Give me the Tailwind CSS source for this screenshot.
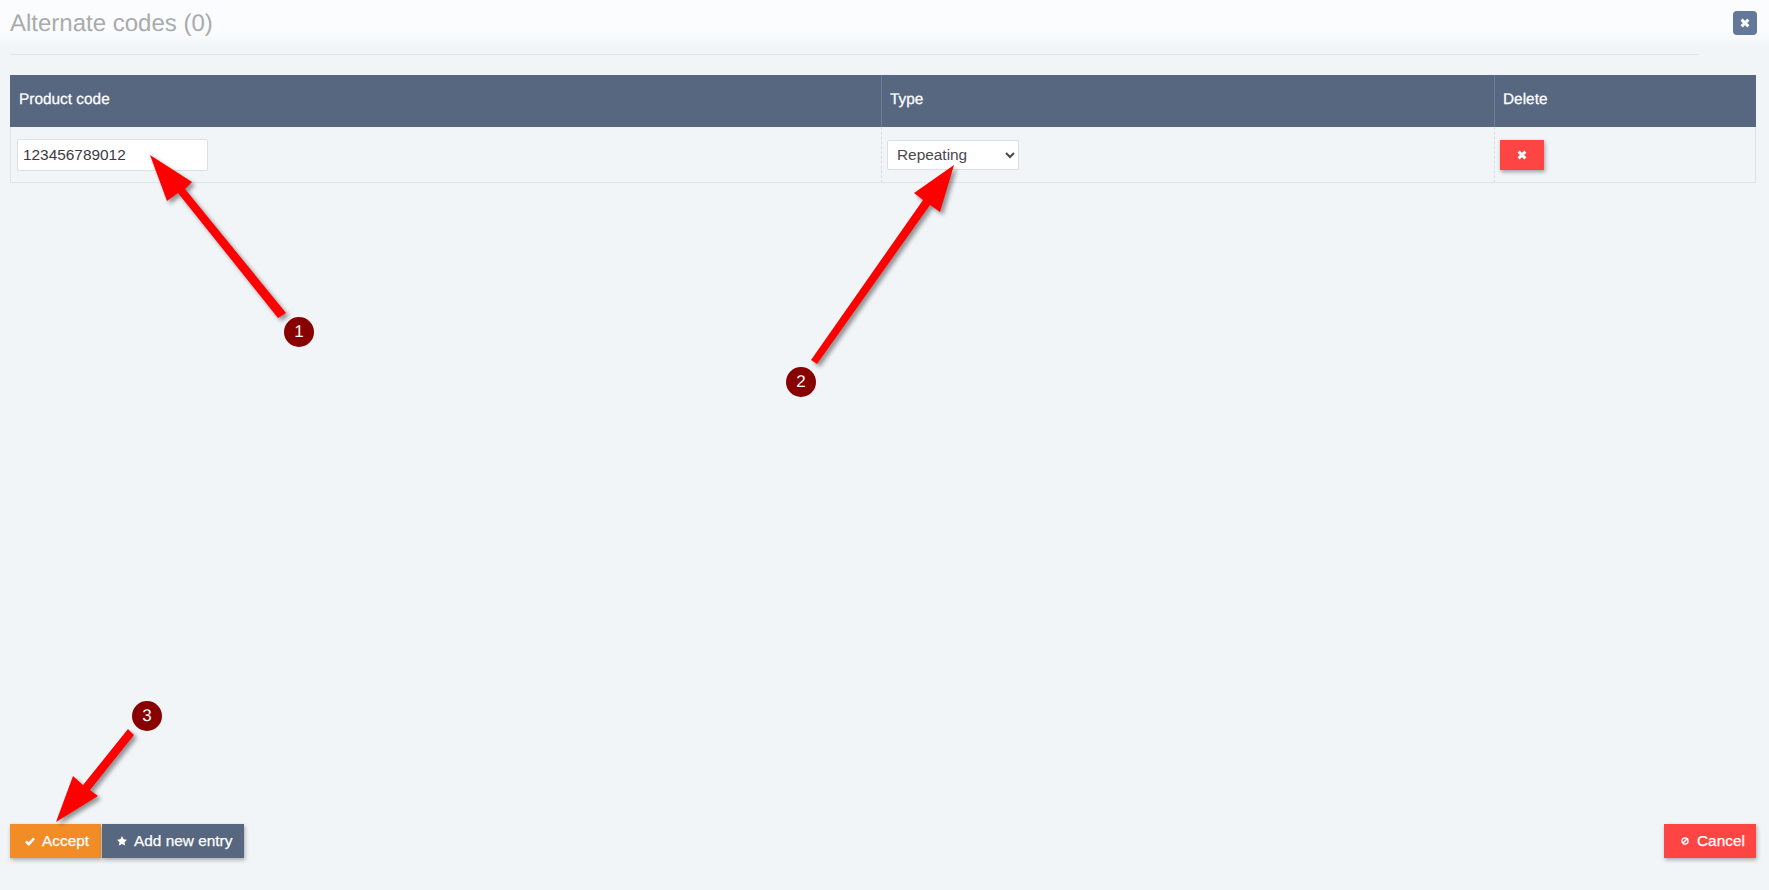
<!DOCTYPE html>
<html lang="en">
  <head>
    <meta charset="UTF-8" />
    <meta name="viewport" content="width=device-width, initial-scale=1.0" />
    <title>Alternate codes</title>
    <script src="https://cdn.jsdelivr.net/npm/@tailwindcss/browser@4"></script>
  </head>
  <body class="relative h-screen overflow-hidden flex flex-col bg-[#f1f5f8] font-['Liberation_Sans',Arial,sans-serif] text-[15.4px] text-[#3d3a40] [text-rendering:geometricPrecision]">
    <!-- title bar -->
    <div class="h-[48px] px-[10px] pt-[8px] flex justify-between bg-gradient-to-b from-[#fbfcfd] from-65% to-[#f1f5f8]">
      <h1 class="text-[24px] leading-[32px] text-[#a9abae]">Alternate codes (0)</h1>
      <button class="mt-[3px] mr-[2px] w-[24px] h-[24px] rounded-[4px] bg-[#64799a] flex items-center justify-center">
        <svg width="10" height="10" viewBox="0 0 10 10"><path d="M1.6 1.6 8.4 8.4M8.4 1.6 1.6 8.4" stroke="#fff" stroke-width="2.9" /></svg>
      </button>
    </div>
    <div class="mx-[10px] mt-[6px] w-[1688px] border-t border-[#dfe2e7]"></div>

    <!-- codes table -->
    <div class="px-[10px] mt-[20px] pr-[13px]">
      <table class="w-full table-fixed border-separate border-spacing-0">
        <thead>
          <tr class="h-[52px] bg-[#56677f] text-white text-left [-webkit-text-stroke:0.25px_white]">
            <th class="w-[871px] pl-[9px] pb-[3px] font-normal">Product code</th>
            <th class="w-[613px] pl-[8px] pb-[3px] font-normal border-l border-[#6b7f9b]">Type</th>
            <th class="pl-[8px] pb-[3px] font-normal border-l border-[#6b7f9b]">Delete</th>
          </tr>
        </thead>
        <tbody>
          <tr class="h-[56px]">
            <td class="pl-[6px] border-l border-b border-[#dfe3e8]">
              <input type="text" value="123456789012" class="block w-[191px] h-[32px] px-[5px] bg-white border border-[#dcdfe3] rounded-[2px] text-[#3d3a40]" />
            </td>
            <td class="pl-[5px] border-l border-b border-l-[#d9dde2] border-b-[#dfe3e8] [border-left-style:dashed]">
              <select class="block w-[132px] h-[30px] pl-[5px] bg-white border border-[#dcdfe3] rounded-[2px] text-[#4a474d]">
                <option>Repeating</option>
              </select>
            </td>
            <td class="pl-[5px] border-l border-b border-r border-l-[#d9dde2] border-b-[#dfe3e8] border-r-[#dfe3e8] [border-left-style:dashed]">
              <button class="w-[44px] h-[30px] bg-[#ff4444] shadow-[1px_2px_4px_rgba(0,0,0,0.35)] flex items-center justify-center">
                <svg width="10" height="10" viewBox="0 0 10 10"><path d="M1.6 1.6 8.4 8.4M8.4 1.6 1.6 8.4" stroke="#fff" stroke-width="2.9" /></svg>
              </button>
            </td>
          </tr>
        </tbody>
      </table>
    </div>

    <!-- actions -->
    <div class="mt-auto mb-[32px] px-[10px] pr-[13px] flex justify-between text-white [-webkit-text-stroke:0.25px_white]">
      <div class="flex gap-px">
        <button class="w-[91px] h-[34px] pl-[15px] bg-[#f28c26] shadow-[1px_2px_4px_rgba(0,0,0,0.3)] flex items-center gap-[7px]">
          <svg width="10" height="9" viewBox="0 0 10 9"><path d="M1 4.500 3.800 7.200 9 1.300" fill="none" stroke="#fff" stroke-width="2.500" /></svg>
          Accept
        </button>
        <button class="w-[142px] h-[34px] pl-[15px] bg-[#56677f] shadow-[1px_2px_4px_rgba(0,0,0,0.3)] flex items-center gap-[7px]">
          <svg width="10" height="10" viewBox="0 0 24 24"><path d="M12 0l3.800 7.800 8.200 1.200-6 5.800 1.500 8.200-7.500-4-7.500 4L6 14.800 0 9l8.200-1.200z" fill="#fff" /></svg>
          Add new entry
        </button>
      </div>
      <button class="w-[92px] h-[34px] pl-[17px] bg-[#ff4444] shadow-[1px_2px_4px_rgba(0,0,0,0.3)] flex items-center gap-[8px]">
        <svg width="8" height="8" viewBox="0 0 10 10"><circle cx="5" cy="5" r="3.800" fill="none" stroke="#fff" stroke-width="1.800" /><path d="M2.400 7.600 7.600 2.400" stroke="#fff" stroke-width="1.800" /></svg>
        Cancel
      </button>
    </div>

    <!-- annotation arrows -->
    <svg class="absolute inset-0 pointer-events-none drop-shadow-[3px_3px_2px_rgba(0,0,0,0.4)]" width="1769" height="890">
      <path d="M150 155 192 182 185 189 286 313 278 318 178 193 167 201z" fill="#ff0000" />
      <path d="M954 165 940 212 930 205 817 364 811 360 923 200 914 193z" fill="#ff0000" />
      <path d="M56 822 73 776 83 785 128 729 134 735 90 790 98 796z" fill="#ff0000" />
    </svg>
    <div class="absolute left-[284px] top-[317px] w-[30px] h-[30px] rounded-full bg-[#880000] text-white flex items-center justify-center text-[17px]">1</div>
    <div class="absolute left-[786px] top-[367px] w-[30px] h-[30px] rounded-full bg-[#880000] text-white flex items-center justify-center text-[17px]">2</div>
    <div class="absolute left-[132px] top-[701px] w-[30px] h-[30px] rounded-full bg-[#880000] text-white flex items-center justify-center text-[17px]">3</div>
  </body>
</html>
